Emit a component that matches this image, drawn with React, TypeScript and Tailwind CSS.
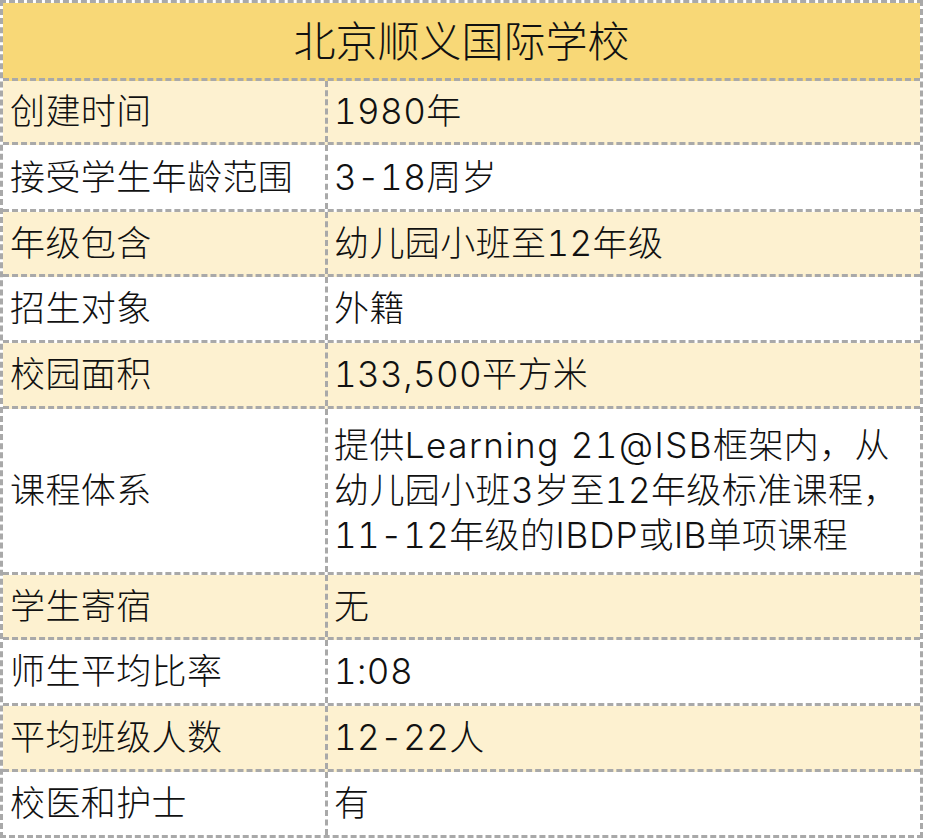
import React from "react";

type Row = { k: string; v: React.ReactNode; h: string; light: boolean; last?: boolean };

const rows: Row[] = [
  { k: "创建时间", v: "1980年", h: "h-[64px]", light: true },
  { k: "接受学生年龄范围", v: "3-18周岁", h: "h-[67px]", light: false },
  { k: "年级包含", v: "幼儿园小班至12年级", h: "h-[65px]", light: true },
  { k: "招生对象", v: "外籍", h: "h-[66px]", light: false },
  { k: "校园面积", v: "133,500平方米", h: "h-[66px]", light: true },
  {
    k: "课程体系",
    v: (
      <span className="block leading-[45px]">
        提供<span className="tracking-[1.5px]">Learning 21@ISB</span>框架内，从
        <br />
        幼儿园小班3岁至12年级标准课程，
        <br />
        11-12年级的<span className="tracking-[1px]">IBDP</span>或IB单项课程
      </span>
    ),
    h: "h-[166px]",
    light: false,
  },
  { k: "学生寄宿", v: "无", h: "h-[65px]", light: true },
  { k: "师生平均比率", v: "1:08", h: "h-[66px]", light: false },
  { k: "平均班级人数", v: "12-22人", h: "h-[66px]", light: true },
  { k: "校医和护士", v: "有", h: "h-[63px]", light: false, last: true },
];

export default function App() {
  return (
    <div
      className="w-[925px] h-[840px] bg-white text-[#111] font-light tabular-nums"
      style={{ fontFamily: '"Inter", "Noto Sans CJK SC", sans-serif' }}
    >
      <div className="w-[923px] border-[3px] border-dashed border-[#a9a9a9] flex flex-col">
        <div className="h-[78px] bg-[#f8d877] border-b-[3px] border-dashed border-[#a9a9a9] flex items-center justify-center text-[42px] pt-[2px]">
          北京顺义国际学校
        </div>
        {rows.map((r, i) => (
          <div
            key={i}
            className={`flex ${r.h} ${r.light ? "bg-[#fdf1d0]" : "bg-white"} ${
              r.last ? "" : "border-b-[3px] border-dashed border-[#a9a9a9]"
            }`}
          >
            <div className="w-[325px] shrink-0 border-r-[3px] border-dashed border-[#a9a9a9] flex items-center pl-[7px] text-[35px] tracking-[0.4px]">
              {r.k}
            </div>
            <div className="flex-1 flex items-center pl-[6px] text-[35px] tracking-[0.4px]">{r.v}</div>
          </div>
        ))}
      </div>
    </div>
  );
}
